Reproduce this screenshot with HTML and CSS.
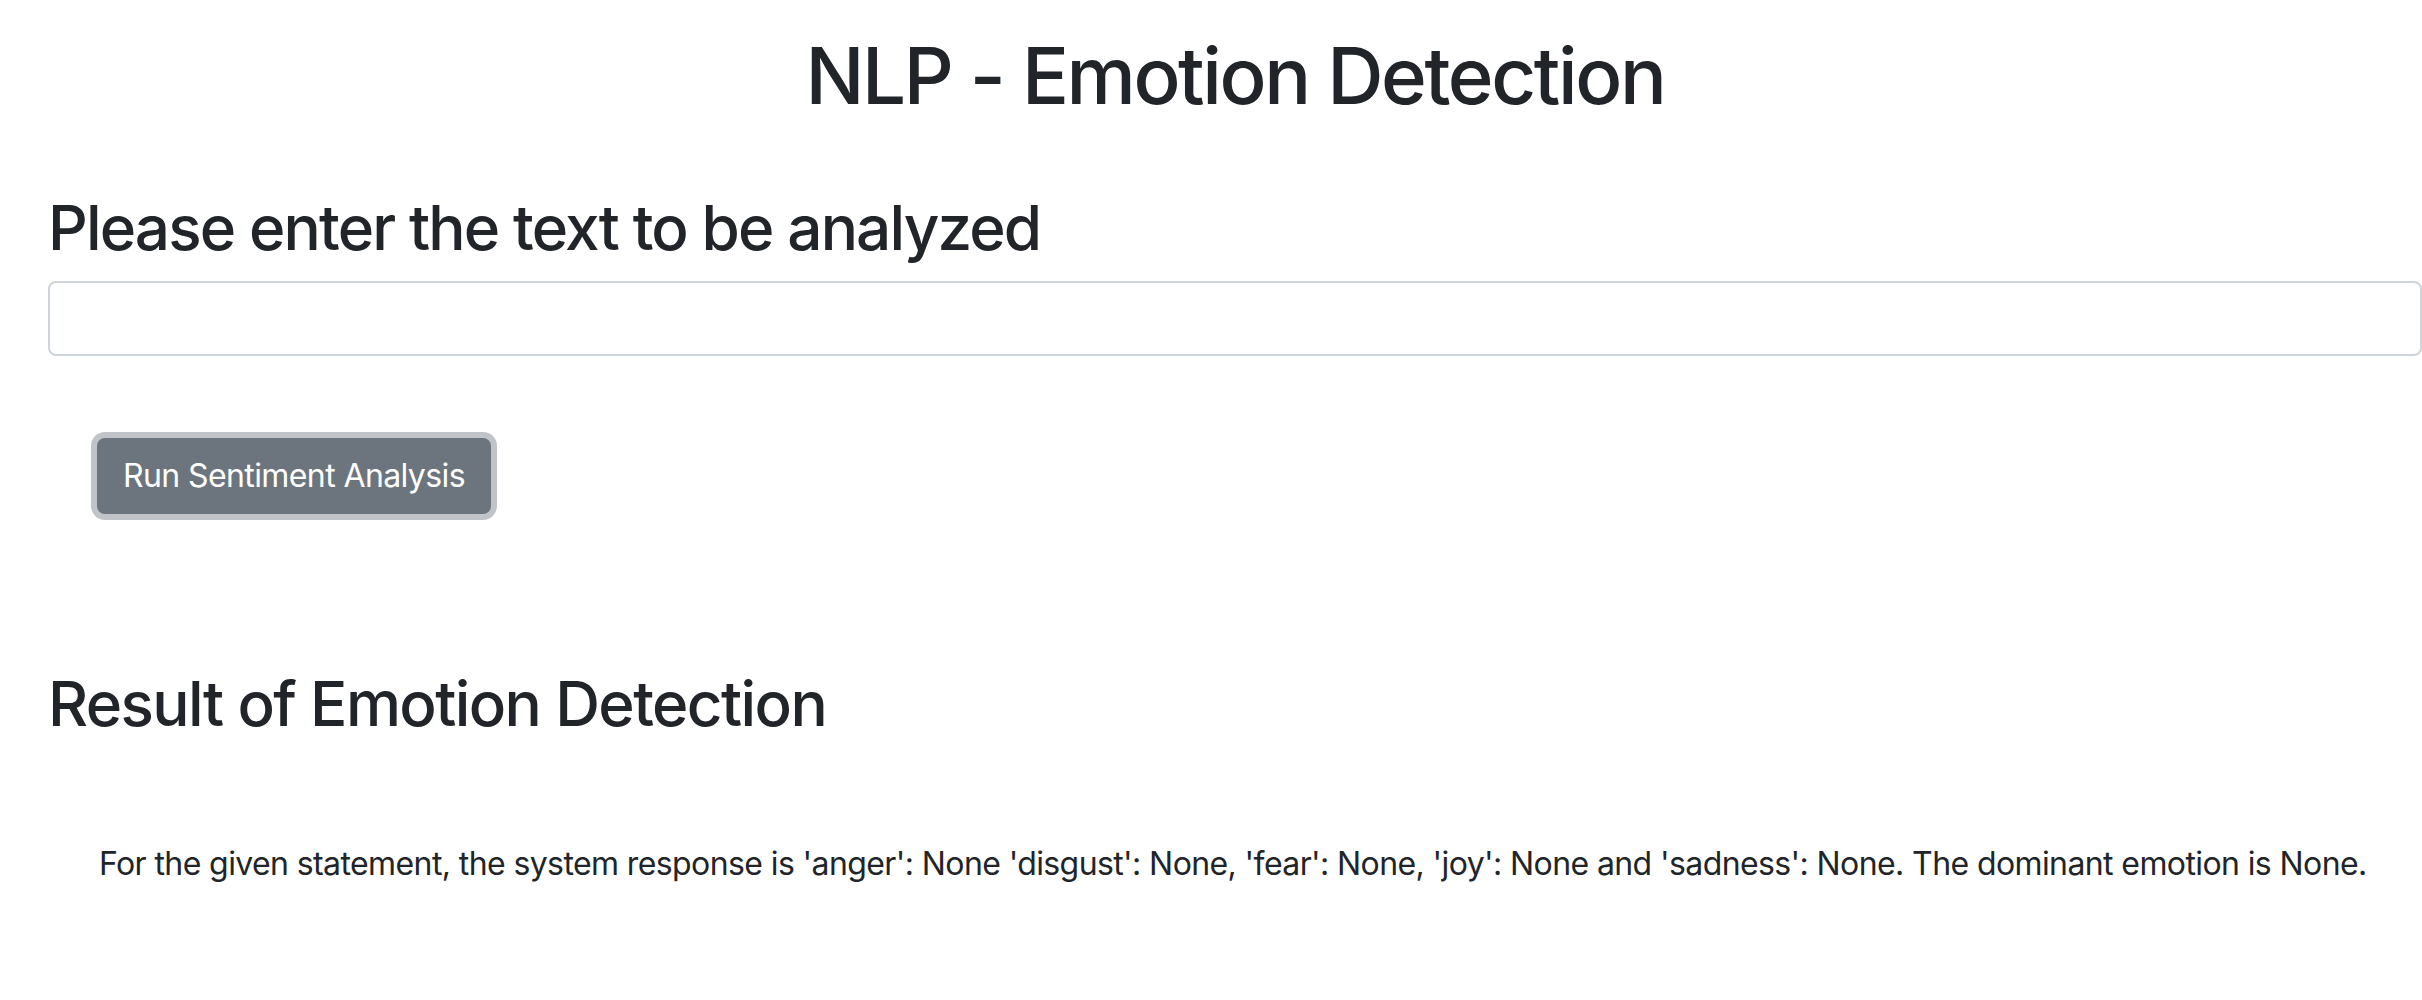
FILE: index.html
```html
<!DOCTYPE html>
<html lang="en">
<head>
<meta charset="utf-8">
<title>NLP - Emotion Detection</title>
<link rel="stylesheet" href="styles.css">
</head>
<body>
<div class="page">
  <h1 class="title">NLP - Emotion Detection</h1>
  <h2 class="section-heading">Please enter the text to be analyzed</h2>
  <input class="text-input" type="text" aria-label="Text to analyze">
  <div class="actions">
    <button class="btn-run" type="button">Run Sentiment Analysis</button>
  </div>
  <h2 class="section-heading result-heading">Result of Emotion Detection</h2>
  <p class="result-text">For the given statement, the system response is 'anger': None 'disgust': None, 'fear': None, 'joy': None and 'sadness': None. The dominant emotion is None.</p>
</div>
</body>
</html>
```

FILE: styles.css
```css
html, body {
  margin: 0;
  padding: 0;
  background: #ffffff;
}

body {
  font-family: Inter, "Noto Sans", "Liberation Sans", sans-serif;
  color: #212529;
  overflow: hidden;
}

.page {
  box-sizing: border-box;
  width: 2422px;
  padding-left: 48px;
  display: flex;
  flex-direction: column;
  align-items: stretch;
}

.title {
  margin: 29px 0 0 0;
  font-size: 78px;
  line-height: 1.2;
  font-weight: 500;
  letter-spacing: -2.4px;
  text-align: center;
}

.section-heading {
  margin: 68px 0 0 0;
  font-size: 62px;
  line-height: 1.2;
  font-weight: 500;
  letter-spacing: -1.85px;
}

.text-input {
  box-sizing: border-box;
  margin-top: 16px;
  height: 75px;
  width: 100%;
  border: 2px solid #ced4da;
  border-radius: 8px;
  background: #fff;
  font: inherit;
  font-size: 32px;
  padding: 0 24px;
  outline: none;
}

.actions {
  display: flex;
  padding-left: 49px;
  margin-top: 82px;
}

.btn-run {
  box-sizing: border-box;
  height: 76px;
  padding: 0 24px;
  border: 2px solid #6c757d;
  border-radius: 8px;
  background: #6c757d;
  color: #ffffff;
  font-family: inherit;
  font-size: 32px;
  font-weight: 400;
  line-height: 1.5;
  letter-spacing: -0.6px;
  box-shadow: 0 0 0 6px rgba(130, 138, 145, 0.5);
}

.result-heading {
  margin-top: 153px;
  letter-spacing: -1.6px;
}

.result-text {
  margin: 99px 0 0 51px;
  font-size: 32px;
  line-height: 1.5;
  letter-spacing: -0.6px;
  white-space: nowrap;
}
```
